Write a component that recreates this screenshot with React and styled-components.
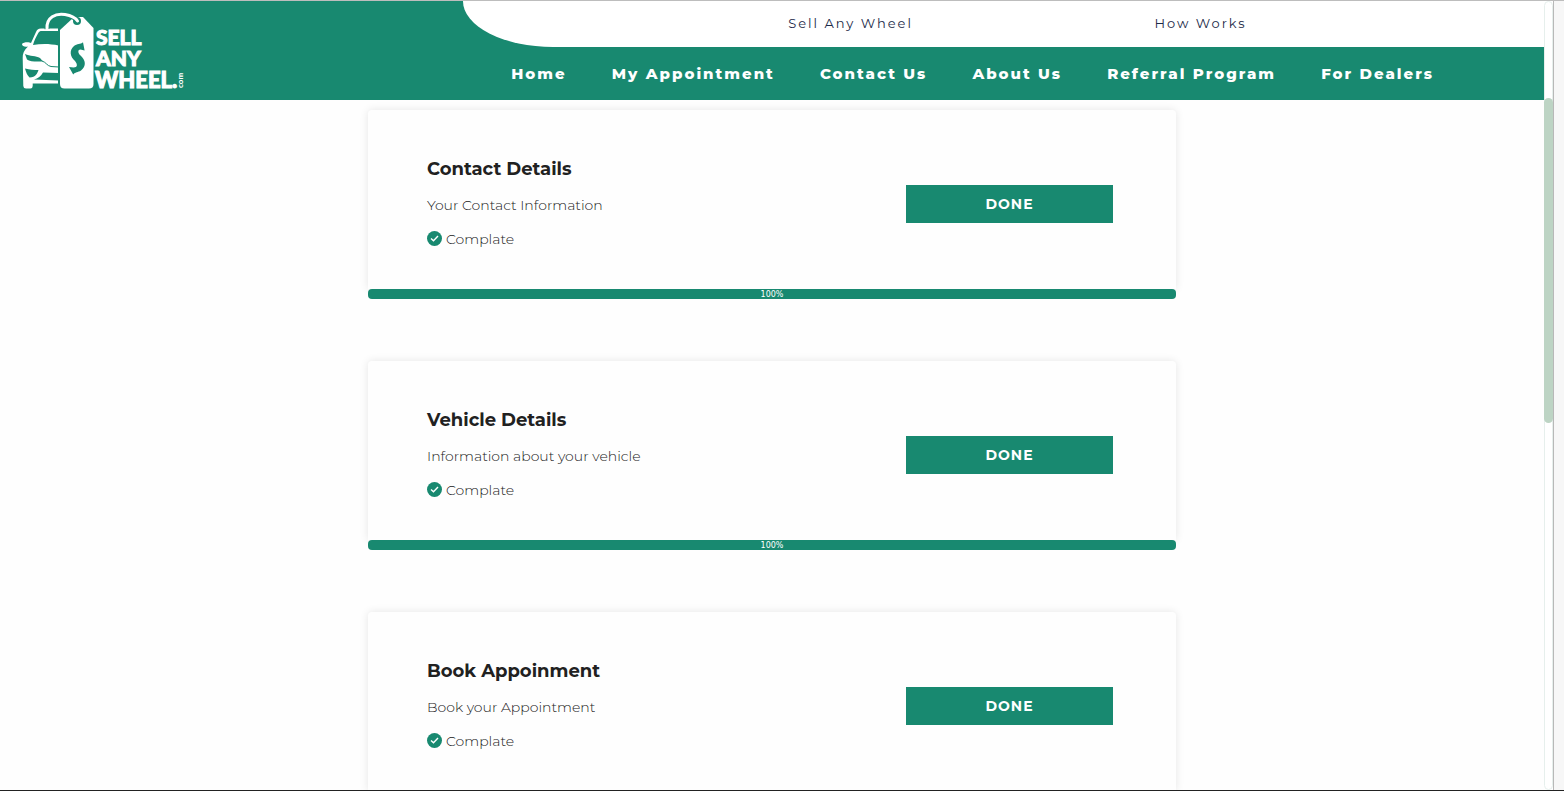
import React from "react";
import styled, { createGlobalStyle } from "styled-components";

const GREEN = "#188970";

const GlobalStyle = createGlobalStyle`
  * { box-sizing: border-box; }
  body {
    margin: 0;
    background: #fff;
    color: #212121;
    font-family: Montserrat, Inter, "Open Sans", sans-serif;
  }
`;

const Frame = styled.div`
  display: flex;
  height: 100vh;
  overflow: hidden;
  border-top: 1px solid #bdbdbd;
  border-bottom: 1px solid #222;
`;

const Page = styled.div`
  flex: 1;
  min-width: 0;
  overflow: hidden;
  background: #fefefe;
`;

const ScrollTrack = styled.div`
  width: 9px;
  padding-top: 96px;
  border: 1px solid #e6efec;
  border-radius: 5px;
  background: #fff;
`;

const ScrollThumb = styled.div`
  height: 47%;
  margin: 0 -1px;
  border-radius: 5px;
  background: #bdd4c4;
`;

const Gutter = styled.div`
  width: 11px;
  border-left: 1px solid #b8b8b8;
  background: #f7f7f7;
`;

const Header = styled.header`
  display: grid;
  grid-template-columns: 30% 70%;
  height: 99px;
  background: ${GREEN};
`;

const Brand = styled.a`
  padding: 7px 16px;
`;

const Menus = styled.div`
  display: flex;
  flex-direction: column;
`;

const TopMenu = styled.nav`
  display: grid;
  grid-template-columns: 350px 350px;
  justify-content: center;
  align-items: center;
  height: 46px;
  padding: 0 0 2px 44px;
  border-bottom-left-radius: 90px 46px;
  background: #fff;
`;

const TopLink = styled.a`
  color: #1c2a48;
  font-size: 13px;
  letter-spacing: 2px;
  text-align: center;
  text-decoration: none;
`;

const MainMenu = styled.nav`
  display: flex;
  flex: 1;
  align-items: center;
  justify-content: space-between;
  padding: 0 110px 6px 48px;
`;

const MainLink = styled.a`
  color: #fff;
  font-size: 15px;
  font-weight: 800;
  letter-spacing: 2px;
  text-decoration: none;
  white-space: nowrap;
`;

const Steps = styled.main`
  display: flex;
  flex-direction: column;
  gap: 62px;
  width: 100%;
  max-width: 808px;
  margin: 0 auto;
  padding-top: 10px;
`;

const Card = styled.section`
  display: flex;
  align-items: center;
  justify-content: space-between;
  height: 179px;
  padding: 8px 63px 0 59px;
  border-radius: 4px 4px 0 0;
  background: #fefefe;
  box-shadow: 0 0 8px rgba(0, 0, 0, 0.1);
`;

const StepText = styled.div`
  padding-top: 10px;
`;

const Title = styled.h2`
  margin: 0 0 12px;
  font-size: 18px;
  font-weight: 700;
  line-height: 24px;
`;

const Note = styled.p`
  display: flex;
  align-items: center;
  gap: 4px;
  margin: 0 0 10px;
  font-size: 14px;
  font-weight: 300;
  line-height: 24px;
`;

const DoneButton = styled.button`
  width: 207px;
  height: 38px;
  border: 0;
  background: ${GREEN};
  color: #fff;
  font-family: inherit;
  font-size: 14px;
  font-weight: 700;
  letter-spacing: 1px;
`;

const Progress = styled.div`
  height: 10px;
  border-radius: 4px;
  background: ${GREEN};
  color: #fff;
  font-family: "DejaVu Sans", sans-serif;
  font-size: 8px;
  line-height: 12px;
  text-align: center;
`;

function Logo() {
  return (
    <svg width="170" height="86" viewBox="16 8 170 86" role="img" aria-label="Sell Any Wheel .com">
      <path
        fill="#fff"
        d="M58.500 28.500H41C38 28.500 37 30 36 32L31 43C29 41.500 23 42 22 44C22 46.500 25 47 28 46.500C24 50 22.500 54 22.700 58L23.300 86Q23.500 88.500 26 88.500H30.500Q32.500 88.500 32.700 86V83.500H58.500Z"
      />
      <path fill={GREEN} d="M42 31H58.500V45.500C50 43.500 41 43.500 33 45C34 41 36 37 38 33.500C39 31.500 40 31 42 31Z" />
      <path fill={GREEN} d="M25 54C30 56.500 36 55.500 40 58L43 61.500C37 61.500 30 62 27 59.500Z" />
      <path d="M42 61C46 62 47 66 51 66.500L59 67" fill="none" stroke={GREEN} strokeWidth="1" />
      <path fill={GREEN} d="M25 68.500C30 69.500 34 70 38.500 70C37 74 36 77 29.500 77.500C27 75 26 72 25 68.500Z" />
      <path fill={GREEN} d="M43 72.500L58.500 73V80.500L34 79.500C38 78.500 41 76 43 72.500Z" />
      <rect x="58" y="28" width="2" height="61" fill={GREEN} />
      <path fill="#fff" d="M73 18Q77 16.500 83 17L93.500 28V84Q93.500 88.500 89 88.500H64.500Q60 88.500 60 84V30Z" />
      <circle cx="77" cy="21" r="4" fill={GREEN} />
      <path d="M47 29C46 17 56 13 65 14.500C71 15.500 75 17 77.500 21" fill="none" stroke={GREEN} strokeWidth="5" />
      <path d="M47 29C46 17 56 13 65 14.500C71 15.500 75 17 77.500 21" fill="none" stroke="#fff" strokeWidth="3" strokeLinecap="round" />
      <path
        fill={GREEN}
        d="M83 42.300L84.600 50.500L80.500 49.500C77.500 49.500 78 53 80 55C86 60 86.500 66 81 70.500C78 72.500 75 72 73.200 74.500L69 67L73.500 67.500C78 67.500 77.500 64 75 61C70 57 69 50 74 46C77 43.500 80.500 44.500 83 42.300Z"
      />
      <g fill="#fff" stroke="#fff" strokeWidth="1" fontFamily="Lato, sans-serif" fontWeight="900">
        <text x="96" y="45" fontSize="21">SELL</text>
        <text x="96" y="66" fontSize="21">ANY</text>
        <text x="95" y="88" fontSize="22">WHEEL.</text>
        <text transform="translate(183 88) rotate(-90)" fontSize="8" strokeWidth="0">com</text>
      </g>
    </svg>
  );
}

function Check() {
  return (
    <svg width="15" height="15" viewBox="0 0 15 15" aria-hidden="true">
      <circle cx="7.500" cy="7.500" r="7.500" fill={GREEN} />
      <path d="M4 7.500L6.500 9.800L11 5" fill="none" stroke="#fff" strokeWidth="1.400" />
    </svg>
  );
}

const mainLinks = ["Home", "My Appointment", "Contact Us", "About Us", "Referral Program", "For Dealers"];

const steps = [
  { title: "Contact Details", note: "Your Contact Information" },
  { title: "Vehicle Details", note: "Information about your vehicle" },
  { title: "Book Appoinment", note: "Book your Appointment" },
];

export default function App() {
  return (
    <Frame>
      <GlobalStyle />
      <Page>
        <Header>
          <Brand href="#"><Logo /></Brand>
          <Menus>
            <TopMenu>
              <TopLink href="#">Sell Any Wheel</TopLink>
              <TopLink href="#">How Works</TopLink>
            </TopMenu>
            <MainMenu>
              {mainLinks.map((label) => <MainLink key={label} href="#">{label}</MainLink>)}
            </MainMenu>
          </Menus>
        </Header>
        <Steps>
          {steps.map(({ title, note }, index) => (
            <div key={title}>
              <Card>
                <StepText>
                  <Title>{title}</Title>
                  <Note>{note}</Note>
                  <Note><Check />Complate</Note>
                </StepText>
                <DoneButton type="button">DONE</DoneButton>
              </Card>
              {index < 2 && (
                <Progress role="progressbar" aria-label={title} aria-valuenow={100}>100%</Progress>
              )}
            </div>
          ))}
        </Steps>
      </Page>
      <ScrollTrack><ScrollThumb /></ScrollTrack>
      <Gutter />
    </Frame>
  );
}
